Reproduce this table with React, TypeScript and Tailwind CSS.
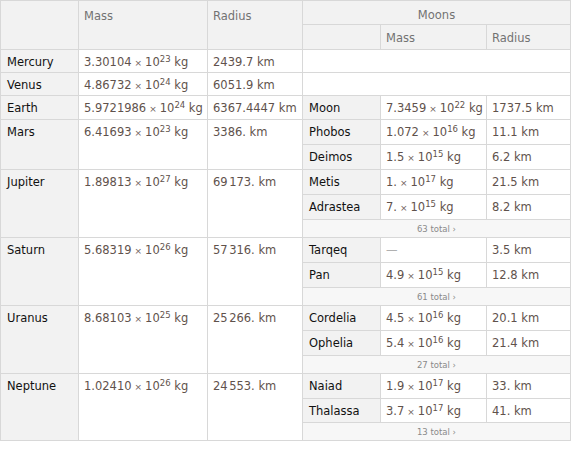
import React from "react";

type Moon = { n: string; m: [string, string] | null; r: string; h: number };
type Planet = {
  name: string;
  mass: [string, string];
  radius: React.ReactNode;
  h?: number;
  moons?: Moon[];
  total?: number;
};

const Mass = ({ v }: { v: [string, string] | null }) => {
  if (!v) return <span className="text-[#b0b0b0]">—</span>;
  return (
    <span className="text-[#5f524c] whitespace-nowrap">
      {v[0]}
      <span className="text-[9px] mx-[3px] text-[#6f625c]">×</span>
      10
      <sup className="text-[8.5px]">{v[1]}</sup> kg
    </span>
  );
};

const Grp = ({ a, b }: { a: string; b: string }) => (
  <span>
    {a}
    <span className="ml-[1.5px]">{b}</span>
  </span>
);

const planets: Planet[] = [
  { name: "Mercury", mass: ["3.30104", "23"], radius: "2439.7 km", h: 23 },
  { name: "Venus", mass: ["4.86732", "24"], radius: "6051.9 km", h: 23 },
  {
    name: "Earth",
    mass: ["5.9721986", "24"],
    radius: "6367.4447 km",
    moons: [{ n: "Moon", m: ["7.3459", "22"], r: "1737.5 km", h: 24 }],
  },
  {
    name: "Mars",
    mass: ["6.41693", "23"],
    radius: "3386. km",
    moons: [
      { n: "Phobos", m: ["1.072", "16"], r: "11.1 km", h: 25 },
      { n: "Deimos", m: ["1.5", "15"], r: "6.2 km", h: 25 },
    ],
  },
  {
    name: "Jupiter",
    mass: ["1.89813", "27"],
    radius: (
      <>
        <Grp a="69" b="173." /> km
      </>
    ),
    moons: [
      { n: "Metis", m: ["1.", "17"], r: "21.5 km", h: 25 },
      { n: "Adrastea", m: ["7.", "15"], r: "8.2 km", h: 25 },
    ],
    total: 63,
  },
  {
    name: "Saturn",
    mass: ["5.68319", "26"],
    radius: (
      <>
        <Grp a="57" b="316." /> km
      </>
    ),
    moons: [
      { n: "Tarqeq", m: null, r: "3.5 km", h: 25 },
      { n: "Pan", m: ["4.9", "15"], r: "12.8 km", h: 25 },
    ],
    total: 61,
  },
  {
    name: "Uranus",
    mass: ["8.68103", "25"],
    radius: (
      <>
        <Grp a="25" b="266." /> km
      </>
    ),
    moons: [
      { n: "Cordelia", m: ["4.5", "16"], r: "20.1 km", h: 25 },
      { n: "Ophelia", m: ["5.4", "16"], r: "21.4 km", h: 25 },
    ],
    total: 27,
  },
  {
    name: "Neptune",
    mass: ["1.02410", "26"],
    radius: (
      <>
        <Grp a="24" b="553." /> km
      </>
    ),
    moons: [
      { n: "Naiad", m: ["1.9", "17"], r: "33. km", h: 25 },
      { n: "Thalassa", m: ["3.7", "17"], r: "41. km", h: 24 },
    ],
    total: 13,
  },
];

export default function App() {
  return (
    <div className="w-[572px] h-[458px] bg-white font-['DejaVu_Sans',sans-serif] text-[11.5px] leading-[15px] text-[#111]">
      <div className="w-[571px] border-l border-t border-[#d8d8d8]">
        {/* header */}
        <div className="grid grid-cols-[78px_129px_95px_268px]">
          <div className="h-[49px] bg-[#f2f2f2] border-r border-b border-[#d8d8d8]" />
          <div className="h-[49px] bg-[#f2f2f2] border-r border-b border-[#d8d8d8] pl-[5px] pt-[8px] text-[#727272]">
            Mass
          </div>
          <div className="h-[49px] bg-[#f2f2f2] border-r border-b border-[#d8d8d8] pl-[5px] pt-[8px] text-[#727272]">
            Radius
          </div>
          <div className="flex flex-col">
            <div className="h-[24px] bg-[#f2f2f2] border-r border-b border-[#d8d8d8] text-center pt-[7px] text-[#727272]">
              Moons
            </div>
            <div className="grid grid-cols-[78px_106px_84px]">
              <div className="h-[25px] bg-[#f2f2f2] border-r border-b border-[#d8d8d8]" />
              <div className="h-[25px] bg-[#f2f2f2] border-r border-b border-[#d8d8d8] pl-[5px] pt-[6px] text-[#727272]">
                Mass
              </div>
              <div className="h-[25px] bg-[#f2f2f2] border-r border-b border-[#d8d8d8] pl-[5px] pt-[6px] text-[#727272]">
                Radius
              </div>
            </div>
          </div>
        </div>
        {planets.map((p) => (
          <div key={p.name} className="grid grid-cols-[78px_129px_95px_268px]">
            <div className="bg-[#f2f2f2] border-r border-b border-[#d8d8d8] pl-[6px] pt-[5px]">
              {p.name}
            </div>
            <div className="border-r border-b border-[#d8d8d8] pl-[5px] pt-[5px]">
              <Mass v={p.mass} />
            </div>
            <div className="border-r border-b border-[#d8d8d8] pl-[5px] pt-[5px] text-[#5f524c] whitespace-nowrap">
              {p.radius}
            </div>
            <div className="flex flex-col">
              {p.moons ? (
                <>
                  {p.moons.map((m) => (
                    <div
                      key={m.n}
                      className="grid grid-cols-[78px_106px_84px]"
                      style={{ height: m.h }}
                    >
                      <div className="bg-[#f2f2f2] border-r border-b border-[#d8d8d8] pl-[6px] pt-[5px]">
                        {m.n}
                      </div>
                      <div className="border-r border-b border-[#d8d8d8] pl-[5px] pt-[5px]">
                        <Mass v={m.m} />
                      </div>
                      <div className="border-r border-b border-[#d8d8d8] pl-[5px] pt-[5px] text-[#5f524c] whitespace-nowrap">
                        {m.r}
                      </div>
                    </div>
                  ))}
                  {p.total ? (
                    <div className="h-[18px] bg-[#f7f7f7] border-r border-b border-[#d8d8d8] flex items-center justify-center text-[8.5px] leading-[10px] text-[#8a8a8a]">
                      {p.total} total ›
                    </div>
                  ) : null}
                </>
              ) : (
                <div
                  className="border-r border-b border-[#d8d8d8]"
                  style={{ height: p.h }}
                />
              )}
            </div>
          </div>
        ))}
      </div>
    </div>
  );
}
